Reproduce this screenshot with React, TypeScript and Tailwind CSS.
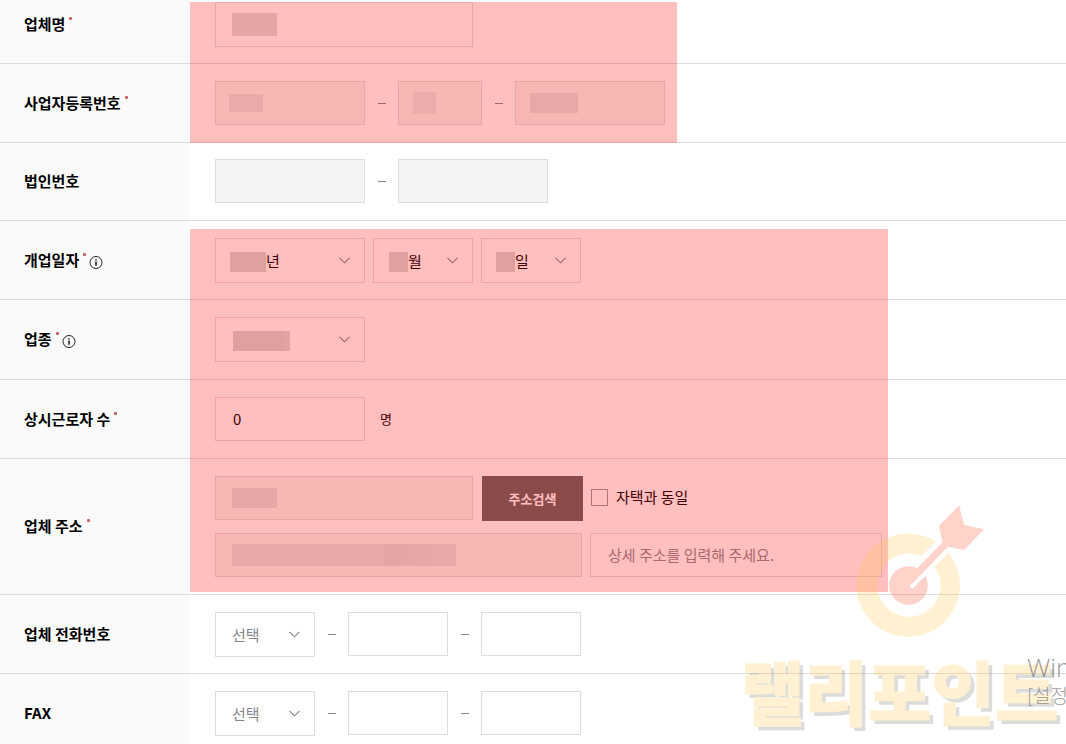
import { useState } from "react";
import type { ReactNode } from "react";

interface RowProps {
  label: string;
  htmlFor: string;
  required?: boolean;
  info?: boolean;
  pad?: string;
  children: ReactNode;
}

interface MaskProps {
  className: string;
}

interface FieldProps {
  id?: string;
  label: string;
  width: string;
  height?: string;
  disabled?: boolean;
  placeholder?: string;
  value?: string;
  inset?: string;
  mask?: string;
}

interface PickerProps {
  id?: string;
  label: string;
  width: string;
  options: string[];
  tone?: string;
  inset?: string;
  mask?: string;
}

// Opaque block that hides a personal value
function Mask({ className }: MaskProps) {
  return <span aria-hidden="true" className={`shrink-0 ${className}`} />;
}

function InfoIcon() {
  return (
    <svg viewBox="0 0 14 14" className="w-[14px] h-[14px]" fill="none" stroke="#222" strokeWidth="1">
      <circle cx="7" cy="6.5" r="6" />
      <path d="M7 5.6v4.2" strokeWidth="1.6" />
      <path d="M7 3.2v1.4" strokeWidth="1.6" />
    </svg>
  );
}

function Chevron() {
  return (
    <svg viewBox="0 0 11 7" className="w-[11px] h-[7px] shrink-0 pointer-events-none" fill="none" stroke="#85858c">
      <path d="M0.5 0.8l5 5 5-5" strokeWidth="1.1" />
    </svg>
  );
}

function Row({ label, htmlFor, required, info, pad = "pt-[17px] pb-4", children }: RowProps) {
  return (
    <div className="flex border-b border-[#ddd]">
      <div className={`w-[190px] shrink-0 flex items-center bg-[#fafafa] pl-6 ${pad}`}>
        <label htmlFor={htmlFor} className="pb-px text-[15px] leading-5 font-bold text-black">
          {label}
        </label>
        {required && <span className="w-[3px] h-[3px] rounded-[1px] bg-[#cc6060] ml-1 mb-3" />}
        {info && (
          <button type="button" aria-label={`${label} 안내`} className="ml-[3px] mt-1">
            <InfoIcon />
          </button>
        )}
      </div>
      <div className={`flex-1 min-w-0 flex items-start pl-[25px] ${pad}`}>{children}</div>
    </div>
  );
}

function Field({
  id,
  label,
  width,
  height = "h-11",
  disabled,
  placeholder,
  value = "",
  inset = "pl-4",
  mask,
}: FieldProps) {
  return (
    <div
      className={`flex items-center border border-[#ddd] ${width} ${height} ${inset} ${
        disabled ? "bg-[#f4f4f2]" : "bg-white"
      }`}
    >
      {mask && <Mask className={mask} />}
      <input
        id={id}
        type="text"
        aria-label={label}
        defaultValue={value}
        placeholder={placeholder}
        disabled={disabled}
        className="flex-1 min-w-0 h-full pb-[2px] text-[15px] text-black placeholder:text-[#8c8c90] outline-none"
      />
    </div>
  );
}

function Picker({ id, label, width, options, tone = "text-black", inset = "pl-4", mask }: PickerProps) {
  return (
    <div className={`flex items-center h-[45px] border border-[#ddd] bg-white pr-[14px] ${width} ${inset}`}>
      {mask && <Mask className={mask} />}
      <select
        id={id}
        aria-label={label}
        className={`flex-1 min-w-0 h-full appearance-none bg-transparent pt-px text-[15px] outline-none ${tone}`}
      >
        {options.map((option) => (
          <option key={option}>{option}</option>
        ))}
      </select>
      <Chevron />
    </div>
  );
}

function Dash() {
  return (
    <div className="w-[33px] h-11 shrink-0 flex items-center justify-center">
      <span className="w-2 h-px bg-[#85858c]" />
    </div>
  );
}

function PhoneFields({ id, label }: { id: string; label: string }) {
  return (
    <>
      <Picker id={id} label={`${label} 앞자리`} width="w-[100px]" options={["선택"]} tone="text-[#85858c]" />
      <Dash />
      <Field label={`${label} 가운데`} width="w-[100px]" />
      <Dash />
      <Field label={`${label} 끝자리`} width="w-[100px]" />
    </>
  );
}

function TargetLogo() {
  return (
    <svg viewBox="378 42 387 402" className="w-[129px] h-[134px]">
      <path
        fill="#ffc84c"
        d="M618 155L574 198A95 95 0 1 0 614 230L655 188A155 155 0 1 1 618 155Z"
      />
      <path
        fill="#ff5030"
        d="M562 235L638 157L627 107L687 46L702 104L762 118L703 180L654 170L539 289L547 297L586 258A58 58 0 1 1 562 235Z"
      />
    </svg>
  );
}

export default function App() {
  const [sameAsHome, setSameAsHome] = useState(false);

  return (
    <main className="relative h-screen overflow-hidden bg-white font-['Noto_Sans_CJK_KR','Noto_Sans',sans-serif]">
      <form>
        <Row label="업체명" htmlFor="company" required pad="pt-[2px] pb-4">
          <Field
            id="company"
            label="업체명"
            width="w-[258px]"
            height="h-[45px]"
            mask="w-[45px] h-[23px] bg-[#dcdcdc]"
          />
        </Row>

        <Row label="사업자등록번호" htmlFor="biz-1" required pad="py-[17px]">
          <Field
            id="biz-1"
            label="사업자등록번호 첫째"
            width="w-[150px]"
            disabled
            inset="pl-[13px]"
            mask="w-[34px] h-[18px] bg-[#e3e3e2]"
          />
          <Dash />
          <Field
            label="사업자등록번호 둘째"
            width="w-[84px]"
            disabled
            inset="pl-[14px]"
            mask="w-[23px] h-[22px] bg-[#e6e6e5]"
          />
          <Dash />
          <Field
            label="사업자등록번호 셋째"
            width="w-[150px]"
            disabled
            inset="pl-[14px]"
            mask="w-12 h-5 bg-[#e0e0df]"
          />
        </Row>

        <Row label="법인번호" htmlFor="corp-1" pad="pt-4 pb-[17px]">
          <Field id="corp-1" label="법인번호 앞자리" width="w-[150px]" disabled />
          <Dash />
          <Field label="법인번호 뒷자리" width="w-[150px]" disabled />
        </Row>

        <Row label="개업일자" htmlFor="open-year" required info>
          <div className="flex gap-2">
            <Picker
              id="open-year"
              label="개업 연도"
              width="w-[150px]"
              options={["년"]}
              inset="pl-[14px]"
              mask="w-9 h-5 mt-[3px] bg-[#d5d5d5]"
            />
            <Picker
              label="개업 월"
              width="w-[100px]"
              options={["월"]}
              inset="pl-[15px]"
              mask="w-[19px] h-5 mt-[3px] bg-[#d5d5d5]"
            />
            <Picker
              label="개업 일"
              width="w-[100px]"
              options={["일"]}
              inset="pl-[14px]"
              mask="w-[19px] h-5 mt-[3px] bg-[#d5d5d5]"
            />
          </div>
        </Row>

        <Row label="업종" htmlFor="industry" required info pad="py-[17px]">
          <Picker
            id="industry"
            label="업종"
            width="w-[150px]"
            options={[""]}
            inset="pl-[17px]"
            mask="w-[57px] h-5 mt-[3px] bg-[#d5d5d5] border-r-[6px] border-[#dadada]"
          />
        </Row>

        <Row label="상시근로자 수" htmlFor="workers" required pad="py-[17px]">
          <Field id="workers" label="상시근로자 수" width="w-[150px]" value="0" inset="pl-[17px]" />
          <span className="h-11 flex items-center pl-[15px] text-[13px] text-black">명</span>
        </Row>

        <Row label="업체 주소" htmlFor="zip" required pad="py-[17px]">
          <div className="flex-1 min-w-0">
            <div className="flex">
              <Field id="zip" label="우편번호" width="w-[258px]" disabled mask="w-[45px] h-5 bg-[#dfdfde]" />
              <button
                type="button"
                className="w-[101px] h-[45px] ml-[9px] bg-[#666464] text-[13px] font-bold text-white"
              >
                주소검색
              </button>
              <label className="flex items-center h-[42px] ml-2 gap-2 text-[15px] text-black">
                <input
                  type="checkbox"
                  checked={sameAsHome}
                  onChange={(e) => setSameAsHome(e.target.checked)}
                  className="appearance-none w-[17px] h-[17px] border border-[#999] bg-white checked:bg-[#666464]"
                />
                자택과 동일
              </label>
            </div>
            <div className="flex mt-3 gap-2">
              <Field
                label="기본 주소"
                width="w-[367px]"
                disabled
                mask="w-[224px] h-[22px] bg-linear-to-r from-[#e1e1e0] from-68% via-[#dbdbda] via-68% to-[#e1e1e0] to-92%"
              />
              <Field
                label="상세 주소"
                width="w-[292px]"
                placeholder="상세 주소를 입력해 주세요."
                inset="pl-[17px]"
              />
            </div>
          </div>
        </Row>

        <Row label="업체 전화번호" htmlFor="tel">
          <PhoneFields id="tel" label="업체 전화번호" />
        </Row>

        <Row label="FAX" htmlFor="fax">
          <PhoneFields id="fax" label="FAX" />
        </Row>
      </form>

      {/* highlighted areas */}
      <div className="absolute left-[190px] top-[2px] w-[487px] h-[141px] bg-[#ff0000]/25 pointer-events-none" />
      <div className="absolute left-[190px] top-[229px] w-[698px] h-[363px] bg-[#ff0000]/25 pointer-events-none" />

      {/* blog watermark */}
      <div className="absolute left-[741px] top-[504px] opacity-25 pointer-events-none">
        <div className="pl-[115px]">
          <TargetLogo />
        </div>
        <p className="mt-1 text-[69px] leading-[96px] font-black whitespace-nowrap text-[#ffc84c] [-webkit-text-stroke:1px_#ffc84c] [text-shadow:4px_4px_0_#767676]">
          랠리포인트
        </p>
      </div>

      {/* system notice running off the edge */}
      <div className="absolute left-[1027px] right-0 top-[651px] overflow-hidden whitespace-nowrap text-[#808080]/80 pointer-events-none">
        <p className="text-[26px] leading-8 font-light font-['Open_Sans',sans-serif]">Win</p>
        <p className="text-[19px] leading-6 font-light">[설정</p>
      </div>
    </main>
  );
}
